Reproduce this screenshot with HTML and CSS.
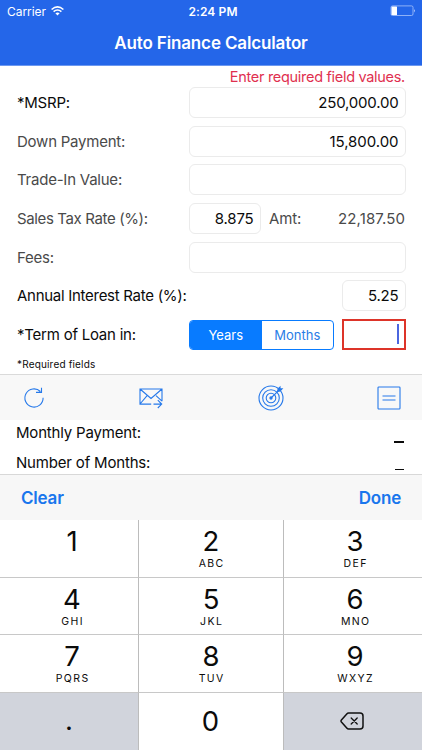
FILE: index.html
```html
<!DOCTYPE html>
<html lang="en">
<head>
<meta charset="utf-8">
<title>Auto Finance Calculator</title>
<link rel="stylesheet" href="styles.css">
</head>
<body>
<header class="header">
  <div class="status">
    <div class="carrier"><span>Carrier</span>
      <svg width="13" height="10" viewBox="0 0 13 10" fill="none" stroke="#fff" stroke-width="1.6"><path d="M.6 3.5Q6.5-1.7 12.4 3.5M2.6 5.7Q6.5 2.3 10.4 5.7"/><path d="M4.4 7.3Q6.5 5.6 8.6 7.3L6.5 9.4Z" fill="#fff" stroke="none"/></svg>
    </div>
    <span class="time">2:24 PM</span>
    <svg class="battery" width="26" height="12" viewBox="0 0 26 12"><rect x="1" y=".9" width="22" height="9.6" rx="1.5" fill="none" stroke="#a9c4fb" stroke-width=".8"/><rect x="1.5" y="1.4" width="5.5" height="8.7" rx=".6" fill="#fff"/><path d="M24.2 4q1.6 1.6 0 3.4z" fill="#dce7ff"/></svg>
  </div>
  <h1 class="title">Auto Finance Calculator</h1>
</header>

<main class="form">
  <p class="alert">Enter required field values.</p>
  <div class="row required"><label>*MSRP:</label><div class="field wide">250,000.00</div></div>
  <div class="row"><label>Down Payment:</label><div class="field wide down">15,800.00</div></div>
  <div class="row"><label>Trade-In Value:</label><div class="field wide"></div></div>
  <div class="row"><label class="tight">Sales Tax Rate (%):</label><div class="field tax">8.875</div><span class="amt">Amt:</span><span class="amount">22,187.50</span></div>
  <div class="row"><label>Fees:</label><div class="field wide"></div></div>
  <div class="row required"><label class="rate">Annual Interest Rate (%):</label><div class="field small">5.25</div></div>
  <div class="row required"><label>*Term of Loan in:</label>
    <div class="segments"><span class="selected">Years</span><span>Months</span></div>
    <div class="field small invalid"><i class="caret"></i></div>
  </div>
  <p class="note">*Required fields</p>
</main>

<nav class="toolbar">
  <svg width="22" height="22" viewBox="0 0 22 22"><path d="M17.4 4.5A9.1 9.1 0 1 0 20.1 10.8M13 5.4h5.5V.8"/></svg>
  <svg width="26" height="22" viewBox="0 0 26 22"><path d="M13.2 17.1H2V2h22v12.3M2 2l11 9.5L24 2M2 17l7.1-8.3M24 14.2l-6-5.5M15.5 17.1h8M19.8 13.2l3.9 3.9-3.9 3.9"/></svg>
  <svg width="26" height="26" viewBox="0 0 26 26"><g><circle cx="13" cy="13" r="12"/><circle cx="13" cy="13" r="8.3"/><circle cx="13" cy="13" r="4.8"/></g><path d="M13 13l7.8-7.6"/><path d="M19.5 6.4l.7-2.6 1.8-1.8v1.9h2.1l-2 2.2z" fill="#2679ea"/><circle cx="13" cy="13" r="1.1" fill="#2679ea"/></svg>
  <svg width="24" height="24" viewBox="0 0 24 24"><rect x="1" y="1" width="22" height="22" rx=".8"/><path d="M5.5 10h13M5.5 14h13"/></svg>
</nav>

<section class="results">
  <div class="result"><span>Monthly Payment:</span><span class="dash strong"></span></div>
  <div class="result"><span>Number of Months:</span><span class="dash"></span></div>
</section>

<div class="accessory"><span>Clear</span><span>Done</span></div>

<div class="keypad">
  <div class="key"><b>1</b></div>
  <div class="key"><b>2</b><small>ABC</small></div>
  <div class="key"><b>3</b><small>DEF</small></div>
  <div class="key"><b>4</b><small>GHI</small></div>
  <div class="key"><b>5</b><small>JKL</small></div>
  <div class="key"><b>6</b><small>MNO</small></div>
  <div class="key"><b>7</b><small>PQRS</small></div>
  <div class="key"><b>8</b><small>TUV</small></div>
  <div class="key"><b>9</b><small>WXYZ</small></div>
  <div class="key util point"><b>.</b></div>
  <div class="key zero"><b>0</b></div>
  <div class="key util delete"><svg width="24" height="18" viewBox="0 0 24 18" fill="none" stroke="#111" stroke-width="1.5" stroke-linejoin="round" stroke-linecap="round"><path d="M8.5 1H20q3 0 3 3v10q0 3-3 3H8.5Q7.6 17 7 16.3L1.4 10q-.8-1 0-2L7 1.7Q7.6 1 8.5 1Z"/><path d="M11.2 6l6 6M17.2 6l-6 6" stroke-width="1.3"/></svg></div>
</div>
</body>
</html>
```

FILE: styles.css
```css
* { box-sizing: border-box; }
body { margin: 0; width: 422px; height: 750px; overflow: hidden; background: #fff; color: #0b0b0b; font-family: Inter, "Liberation Sans", sans-serif; font-size: 15px; display: flex; flex-direction: column; }
p, h1 { margin: 0; }
svg { display: block; flex: none; }

.header { height: 66px; flex: none; background: #2466e9; border-bottom: 1px solid #6c98f0; color: #fff; }
.status { height: 22px; display: grid; grid-template-columns: 1fr auto 1fr; align-items: center; padding: 0 6px 0 7px; }
.carrier { display: flex; align-items: center; gap: 5px; font-size: 12px; letter-spacing: -.05px; }
.time { font-size: 12px; font-weight: 600; letter-spacing: .1px; padding-left: 3px; }
.battery { justify-self: end; }
.title { height: 43px; line-height: 43px; text-align: center; font-size: 17px; font-weight: 600; letter-spacing: -.14px; }

.form { height: 308px; flex: none; padding: 1px 16px 0 17px; }
.alert { height: 16px; line-height: 19px; text-align: right; color: #df304f; font-size: 14.5px; letter-spacing: -.3px; padding-right: 1px; }
.row { height: 38.7px; display: flex; align-items: center; color: #4a4a4a; }
.row label { width: 172px; flex: none; white-space: nowrap; letter-spacing: -.23px; }
.row .tight { letter-spacing: -.37px; }
.row .rate { letter-spacing: -.28px; }
.required { color: #0b0b0b; }
.field { height: 31px; border: 1px solid #ebebeb; border-radius: 6px; padding: 0 6.5px 0 7px; display: flex; align-items: center; justify-content: flex-end; color: #0b0b0b; letter-spacing: -.2px; }
.field.down { letter-spacing: -.05px; }
.wide { width: 217px; }
.tax { width: 72px; }
.small { width: 64px; margin-left: auto; }
.amt { margin-left: 8px; letter-spacing: -.1px; }
.amount { margin-left: auto; padding-right: 1px; letter-spacing: .1px; }
.invalid { border: 2px solid #dd3429; border-radius: 0; padding-right: 5.5px; }
.caret { width: 2px; height: 20px; background: #4b66df; }
.segments { width: 145px; height: 30px; display: flex; border: 1px solid #087bff; border-radius: 4px; overflow: hidden; color: #2a7de6; font-size: 13px; margin-top: 1px; }
.segments span { flex: 1; display: flex; align-items: center; justify-content: center; }
.segments .selected { background: #087bff; color: #fff; }
.note { font-size: 10px; line-height: 14px; margin-top: 3.5px; letter-spacing: .17px; }

.toolbar { height: 46px; flex: none; background: #f8f8f8; border-top: 1px solid #dadada; display: flex; align-items: center; justify-content: space-between; padding: 0 21px 0 22.5px; }
.toolbar svg { fill: none; stroke: #2679ea; stroke-width: 1.1; }

.results { height: 54px; flex: none; padding: 0 18.5px 0 16px; letter-spacing: -.18px; }
.result { display: flex; justify-content: space-between; height: 29.5px; line-height: 26px; }
.dash { width: 9px; height: 1px; background: #0b0b0b; margin-top: 19px; }
.dash.strong { width: 10px; height: 2px; margin-top: 21px; }

.accessory { height: 46px; flex: none; background: #f7f7f7; border-top: 1px solid #d8d8d8; display: flex; align-items: center; justify-content: space-between; padding: 0 21px; color: #1976ed; font-size: 17px; font-weight: 600; letter-spacing: -.2px; }

.keypad { height: 230px; flex: none; display: grid; grid-template-columns: 139px 145px 138px; grid-template-rows: 58px 57px 58px 57px; }
.key { display: flex; flex-direction: column; align-items: center; padding-top: 4px; border-right: 1px solid #bcbcbc; border-bottom: 1px solid #c8c8c8; }
.key:nth-child(3n+1) { padding-left: 6px; }
.key:nth-child(3n) { border-right: 0; padding-left: 4px; }
.key:nth-child(n+10) { border-bottom: 0; }
.key b { font-size: 27.5px; line-height: 34px; font-weight: 400; }
.key small { font-size: 10.5px; line-height: 12px; letter-spacing: 1.4px; margin-right: -1.4px; }
.key.util { background: #d1d4dc; justify-content: center; padding-top: 0; }
.key.point { padding: 0 0 4px; }
.key.delete { padding: 0 2px 2px 0; }
.key.zero { justify-content: center; padding: 0 1px 2px 0; }
```
